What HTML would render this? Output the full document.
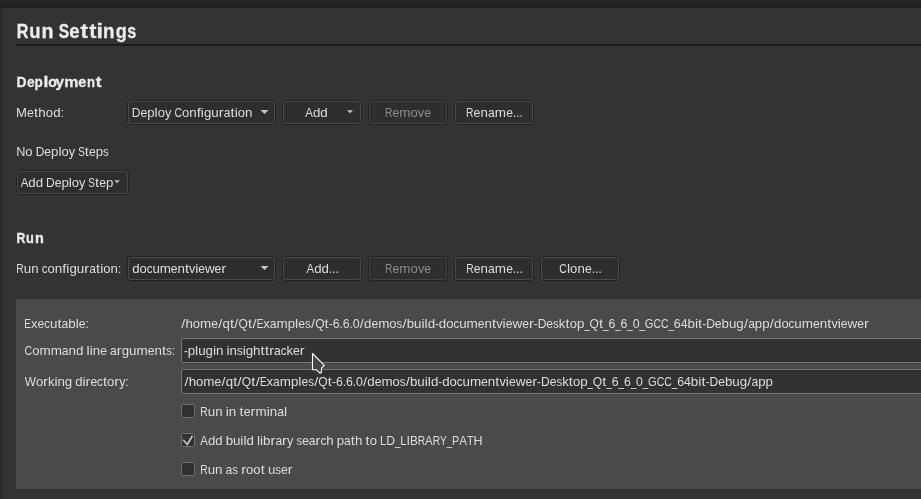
<!DOCTYPE html>
<html><head><meta charset="utf-8">
<style>
html,body{margin:0;padding:0;background:#333333;overflow:hidden;width:921px;height:499px}
svg{display:block;will-change:transform}
text{font-family:"Liberation Sans",sans-serif;font-size:13px;white-space:pre;fill:#dddddd}
.b,.b text{font-weight:bold;fill:#ececec;stroke:#ececec;stroke-width:0.3px}
.d text,text.d{fill:#8c8c8c}
</style></head><body>
<svg width="921" height="499" viewBox="0 0 921 499">
<rect x="0" y="0" width="921" height="499" fill="#333333"/>
<rect x="0" y="0" width="921" height="7" fill="#242424"/>
<rect x="0" y="7" width="921" height="1" fill="#1d1d1d"/>
<rect x="1" y="8" width="1" height="491" fill="#222222"/>
<rect x="0" y="8" width="1" height="491" fill="#2f2f2f"/>
<rect x="16" y="44" width="905" height="2" fill="#1c1c1c"/>
<rect x="127.5" y="100.5" width="148" height="24" rx="3.5" fill="none" stroke="#222222"/><rect x="128.5" y="101.5" width="146" height="22" rx="2" fill="#2e2e2e" stroke="#4a4a4a"/>
<path d="M260.5 110 h8 l-4.0 4 z" fill="#c4c4c4"/>
<rect x="282.5" y="100.5" width="79" height="24" rx="3.5" fill="none" stroke="#222222"/><rect x="283.5" y="101.5" width="77" height="22" rx="2" fill="#2e2e2e" stroke="#4a4a4a"/>
<path d="M347.0 110.2 h6 l-3.0 3 z" fill="#c4c4c4"/>
<rect x="368.5" y="100.5" width="79" height="24" rx="3.5" fill="none" stroke="#222222"/><rect x="369.5" y="101.5" width="77" height="22" rx="2" fill="#2e2e2e" stroke="#434343"/>
<rect x="454.5" y="100.5" width="79" height="24" rx="3.5" fill="none" stroke="#222222"/><rect x="455.5" y="101.5" width="77" height="22" rx="2" fill="#2e2e2e" stroke="#4a4a4a"/>
<rect x="16.5" y="170.5" width="112" height="24" rx="3.5" fill="none" stroke="#222222"/><rect x="17.5" y="171.5" width="110" height="22" rx="2" fill="#2e2e2e" stroke="#4a4a4a"/>
<path d="M114.0 180.3 h6 l-3.0 3 z" fill="#b4b4b4"/>
<rect x="127.5" y="256.5" width="148" height="24" rx="3.5" fill="none" stroke="#222222"/><rect x="128.5" y="257.5" width="146" height="22" rx="2" fill="#2e2e2e" stroke="#4a4a4a"/>
<path d="M260.5 266 h8 l-4.0 4 z" fill="#c4c4c4"/>
<rect x="282.5" y="256.5" width="79" height="24" rx="3.5" fill="none" stroke="#222222"/><rect x="283.5" y="257.5" width="77" height="22" rx="2" fill="#2e2e2e" stroke="#4a4a4a"/>
<rect x="368.5" y="256.5" width="79" height="24" rx="3.5" fill="none" stroke="#222222"/><rect x="369.5" y="257.5" width="77" height="22" rx="2" fill="#2e2e2e" stroke="#434343"/>
<rect x="454.5" y="256.5" width="79" height="24" rx="3.5" fill="none" stroke="#222222"/><rect x="455.5" y="257.5" width="77" height="22" rx="2" fill="#2e2e2e" stroke="#4a4a4a"/>
<rect x="540.5" y="256.5" width="79" height="24" rx="3.5" fill="none" stroke="#222222"/><rect x="541.5" y="257.5" width="77" height="22" rx="2" fill="#2e2e2e" stroke="#4a4a4a"/>
<rect x="16" y="299" width="905" height="190" fill="#4a4a4a"/>
<rect x="181.5" y="338.5" width="745" height="24" rx="1.5" fill="#323232" stroke="#747474"/>
<rect x="181.5" y="369.5" width="745" height="24" rx="1.5" fill="#323232" stroke="#747474"/>
<rect x="181.5" y="404.5" width="13" height="13" rx="1" fill="#313131" stroke="#707070"/>
<rect x="181.5" y="433.5" width="13" height="13" rx="1" fill="#313131" stroke="#707070"/>
<rect x="181.5" y="462.5" width="13" height="13" rx="1" fill="#313131" stroke="#707070"/>
<path d="M183.6 440.3 L187.3 444.5 L192.1 436.2" fill="none" stroke="#c4c4c4" stroke-width="1.7" stroke-linecap="round" stroke-linejoin="round"/>
<g class="b"><text transform="matrix(0.832 0 0 1 16.71 37.5)" style="font-size:19.5px">R</text><text transform="matrix(0.945 0 0 1 29.36 37.5)" style="font-size:19.5px">u</text><text transform="matrix(1.009 0 0 1 41.50 37.5)" style="font-size:19.5px">n</text><text transform="matrix(0.800 0 0 1 58.85 37.5)" style="font-size:19.5px">S</text><text transform="matrix(0.956 0 0 1 69.37 37.5)" style="font-size:19.5px">e</text><text transform="matrix(1.147 0 0 1 80.53 37.5)" style="font-size:19.5px">t</text><text transform="matrix(1.097 0 0 1 89.34 37.5)" style="font-size:19.5px">t</text><text transform="matrix(1.196 0 0 1 96.47 37.5)" style="font-size:19.5px">i</text><text transform="matrix(0.966 0 0 1 102.96 37.5)" style="font-size:19.5px">n</text><text transform="matrix(0.928 0 0 1 115.66 37.5)" style="font-size:19.5px">g</text><text transform="matrix(0.833 0 0 1 127.33 37.5)" style="font-size:19.5px">s</text></g>
<g class="b"><text transform="matrix(0.943 0 0 1 16.47 87.0)" style="font-size:14.7px">D</text><text transform="matrix(0.930 0 0 1 27.07 87.0)" style="font-size:14.7px">e</text><text transform="matrix(0.918 0 0 1 34.51 87.0)" style="font-size:14.7px">p</text><text transform="matrix(1.190 0 0 1 43.38 87.0)" style="font-size:14.7px">l</text><text transform="matrix(0.958 0 0 1 48.15 87.0)" style="font-size:14.7px">o</text><text transform="matrix(1.052 0 0 1 55.48 87.0)" style="font-size:14.7px">y</text><text transform="matrix(1.081 0 0 1 64.35 87.0)" style="font-size:14.7px">m</text><text transform="matrix(0.986 0 0 1 78.33 87.0)" style="font-size:14.7px">e</text><text transform="matrix(0.887 0 0 1 87.04 87.0)" style="font-size:14.7px">n</text><text transform="matrix(1.168 0 0 1 95.69 87.0)" style="font-size:14.7px">t</text></g>
<g class="b"><text transform="matrix(0.836 0 0 1 16.38 242.6)" style="font-size:14.7px">R</text><text transform="matrix(0.873 0 0 1 26.00 242.6)" style="font-size:14.7px">u</text><text transform="matrix(0.986 0 0 1 34.94 242.6)" style="font-size:14.7px">n</text></g>
<g><text transform="matrix(1.005 0 0 1 15.93 116.8)">M</text><text transform="matrix(0.936 0 0 1 26.98 116.8)">e</text><text transform="matrix(1.120 0 0 1 33.99 116.8)">t</text><text transform="matrix(1.026 0 0 1.05 38.24 116.8)">h</text><text transform="matrix(1.004 0 0 1 45.77 116.8)">o</text><text transform="matrix(1.021 0 0 1.05 53.14 116.8)">d</text><text transform="matrix(0.890 0 0 1 60.63 116.8)">:</text></g>
<g><text transform="matrix(0.929 0 0 1 131.71 116.8)">D</text><text transform="matrix(0.936 0 0 1 140.43 116.8)">e</text><text transform="matrix(1.021 0 0 1 147.20 116.8)">p</text><text transform="matrix(1.072 0 0 1.05 154.58 116.8)">l</text><text transform="matrix(1.004 0 0 1 157.67 116.8)">o</text><text transform="matrix(0.978 0 0 1 164.93 116.8)">y</text><text transform="matrix(0.808 0 0 1 174.41 116.8)">C</text><text transform="matrix(1.004 0 0 1 181.99 116.8)">o</text><text transform="matrix(1.026 0 0 1 189.25 116.8)">n</text><text transform="matrix(1.120 0 0 1.05 196.71 116.8)">f</text><text transform="matrix(1.072 0 0 1 200.79 116.8)">i</text><text transform="matrix(1.021 0 0 1 203.89 116.8)">g</text><text transform="matrix(1.026 0 0 1 211.26 116.8)">u</text><text transform="matrix(1.120 0 0 1 218.73 116.8)">r</text><text transform="matrix(0.931 0 0 1 223.63 116.8)">a</text><text transform="matrix(1.120 0 0 1 230.51 116.8)">t</text><text transform="matrix(1.072 0 0 1 234.70 116.8)">i</text><text transform="matrix(1.004 0 0 1 237.79 116.8)">o</text><text transform="matrix(1.026 0 0 1 245.05 116.8)">n</text></g>
<g><text transform="matrix(0.884 0 0 1 305.28 116.8)">A</text><text transform="matrix(1.021 0 0 1.05 312.92 116.8)">d</text><text transform="matrix(1.021 0 0 1.05 320.28 116.8)">d</text></g>
<g class="d"><text transform="matrix(0.790 0 0 1 384.96 116.8)">R</text><text transform="matrix(0.936 0 0 1 392.41 116.8)">e</text><text transform="matrix(1.036 0 0 1 399.22 116.8)">m</text><text transform="matrix(1.004 0 0 1 410.49 116.8)">o</text><text transform="matrix(0.977 0 0 1 417.79 116.8)">v</text><text transform="matrix(0.936 0 0 1 424.17 116.8)">e</text></g>
<g><text transform="matrix(0.790 0 0 1 466.06 116.8)">R</text><text transform="matrix(0.936 0 0 1 473.58 116.8)">e</text><text transform="matrix(1.026 0 0 1 480.45 116.8)">n</text><text transform="matrix(0.931 0 0 1 487.98 116.8)">a</text><text transform="matrix(1.036 0 0 1 494.81 116.8)">m</text><text transform="matrix(0.936 0 0 1 506.20 116.8)">e</text><text transform="matrix(0.890 0 0 1 513.07 116.8)">.</text><text transform="matrix(0.890 0 0 1 516.34 116.8)">.</text><text transform="matrix(0.890 0 0 1 519.60 116.8)">.</text></g>
<g><text transform="matrix(0.978 0 0 1 16.16 155.9)">N</text><text transform="matrix(1.004 0 0 1 25.29 155.9)">o</text><text transform="matrix(0.929 0 0 1 35.63 155.9)">D</text><text transform="matrix(0.936 0 0 1 44.31 155.9)">e</text><text transform="matrix(1.021 0 0 1 51.05 155.9)">p</text><text transform="matrix(1.072 0 0 1.05 58.39 155.9)">l</text><text transform="matrix(1.004 0 0 1 61.48 155.9)">o</text><text transform="matrix(0.978 0 0 1 68.70 155.9)">y</text><text transform="matrix(0.760 0 0 1 78.13 155.9)">S</text><text transform="matrix(1.120 0 0 1 84.82 155.9)">t</text><text transform="matrix(0.936 0 0 1 88.98 155.9)">e</text><text transform="matrix(1.021 0 0 1 95.72 155.9)">p</text><text transform="matrix(0.884 0 0 1 103.07 155.9)">s</text></g>
<g><text transform="matrix(0.884 0 0 1 20.78 186.7)">A</text><text transform="matrix(1.021 0 0 1.05 28.37 186.7)">d</text><text transform="matrix(1.021 0 0 1.05 35.68 186.7)">d</text><text transform="matrix(0.929 0 0 1 46.08 186.7)">D</text><text transform="matrix(0.936 0 0 1 54.72 186.7)">e</text><text transform="matrix(1.021 0 0 1 61.43 186.7)">p</text><text transform="matrix(1.072 0 0 1.05 68.74 186.7)">l</text><text transform="matrix(1.004 0 0 1 71.80 186.7)">o</text><text transform="matrix(0.978 0 0 1 78.99 186.7)">y</text><text transform="matrix(0.760 0 0 1 88.37 186.7)">S</text><text transform="matrix(1.120 0 0 1 95.03 186.7)">t</text><text transform="matrix(0.936 0 0 1 99.17 186.7)">e</text><text transform="matrix(1.021 0 0 1 105.88 186.7)">p</text></g>
<g><text transform="matrix(0.790 0 0 1 16.36 272.8)">R</text><text transform="matrix(1.026 0 0 1 23.78 272.8)">u</text><text transform="matrix(1.026 0 0 1 31.20 272.8)">n</text><text transform="matrix(0.886 0 0 1 41.74 272.8)">c</text><text transform="matrix(1.004 0 0 1 47.51 272.8)">o</text><text transform="matrix(1.026 0 0 1 54.77 272.8)">n</text><text transform="matrix(1.120 0 0 1.05 62.23 272.8)">f</text><text transform="matrix(1.072 0 0 1 66.32 272.8)">i</text><text transform="matrix(1.021 0 0 1 69.42 272.8)">g</text><text transform="matrix(1.026 0 0 1 76.81 272.8)">u</text><text transform="matrix(1.120 0 0 1 84.28 272.8)">r</text><text transform="matrix(0.931 0 0 1 89.19 272.8)">a</text><text transform="matrix(1.120 0 0 1 96.07 272.8)">t</text><text transform="matrix(1.072 0 0 1 100.26 272.8)">i</text><text transform="matrix(1.004 0 0 1 103.36 272.8)">o</text><text transform="matrix(1.026 0 0 1 110.62 272.8)">n</text><text transform="matrix(0.890 0 0 1 118.04 272.8)">:</text></g>
<g><text transform="matrix(1.021 0 0 1.05 132.34 272.8)">d</text><text transform="matrix(1.004 0 0 1 139.61 272.8)">o</text><text transform="matrix(0.886 0 0 1 146.76 272.8)">c</text><text transform="matrix(1.026 0 0 1 152.44 272.8)">u</text><text transform="matrix(1.036 0 0 1 159.74 272.8)">m</text><text transform="matrix(0.936 0 0 1 170.79 272.8)">e</text><text transform="matrix(1.026 0 0 1 177.46 272.8)">n</text><text transform="matrix(1.120 0 0 1 184.91 272.8)">t</text><text transform="matrix(0.977 0 0 1 189.03 272.8)">v</text><text transform="matrix(1.072 0 0 1 195.28 272.8)">i</text><text transform="matrix(0.936 0 0 1 198.33 272.8)">e</text><text transform="matrix(1.039 0 0 1 205.00 272.8)">w</text><text transform="matrix(0.936 0 0 1 214.61 272.8)">e</text><text transform="matrix(1.120 0 0 1 221.33 272.8)">r</text></g>
<g><text transform="matrix(0.884 0 0 1 306.38 272.8)">A</text><text transform="matrix(1.021 0 0 1.05 314.13 272.8)">d</text><text transform="matrix(1.021 0 0 1.05 321.58 272.8)">d</text><text transform="matrix(0.890 0 0 1 329.04 272.8)">.</text><text transform="matrix(0.890 0 0 1 332.29 272.8)">.</text><text transform="matrix(0.890 0 0 1 335.54 272.8)">.</text></g>
<g class="d"><text transform="matrix(0.790 0 0 1 385.06 272.8)">R</text><text transform="matrix(0.936 0 0 1 392.51 272.8)">e</text><text transform="matrix(1.036 0 0 1 399.32 272.8)">m</text><text transform="matrix(1.004 0 0 1 410.59 272.8)">o</text><text transform="matrix(0.977 0 0 1 417.89 272.8)">v</text><text transform="matrix(0.936 0 0 1 424.27 272.8)">e</text></g>
<g><text transform="matrix(0.790 0 0 1 466.16 272.8)">R</text><text transform="matrix(0.936 0 0 1 473.66 272.8)">e</text><text transform="matrix(1.026 0 0 1 480.51 272.8)">n</text><text transform="matrix(0.931 0 0 1 488.02 272.8)">a</text><text transform="matrix(1.036 0 0 1 494.83 272.8)">m</text><text transform="matrix(0.936 0 0 1 506.18 272.8)">e</text><text transform="matrix(0.890 0 0 1 513.03 272.8)">.</text><text transform="matrix(0.890 0 0 1 516.29 272.8)">.</text><text transform="matrix(0.890 0 0 1 519.54 272.8)">.</text></g>
<g><text transform="matrix(0.808 0 0 1 559.27 272.8)">C</text><text transform="matrix(1.072 0 0 1.05 566.96 272.8)">l</text><text transform="matrix(1.004 0 0 1 570.11 272.8)">o</text><text transform="matrix(1.026 0 0 1 577.48 272.8)">n</text><text transform="matrix(0.936 0 0 1 585.00 272.8)">e</text><text transform="matrix(0.890 0 0 1 591.87 272.8)">.</text><text transform="matrix(0.890 0 0 1 595.14 272.8)">.</text><text transform="matrix(0.890 0 0 1 598.40 272.8)">.</text></g>
<g><text transform="matrix(0.769 0 0 1 24.28 328.0)">E</text><text transform="matrix(1.008 0 0 1 30.92 328.0)">x</text><text transform="matrix(0.936 0 0 1 37.44 328.0)">e</text><text transform="matrix(0.886 0 0 1 44.17 328.0)">c</text><text transform="matrix(1.026 0 0 1 49.90 328.0)">u</text><text transform="matrix(1.120 0 0 1 57.42 328.0)">t</text><text transform="matrix(0.931 0 0 1 61.59 328.0)">a</text><text transform="matrix(1.021 0 0 1.05 68.29 328.0)">b</text><text transform="matrix(1.072 0 0 1.05 75.63 328.0)">l</text><text transform="matrix(0.936 0 0 1 78.71 328.0)">e</text><text transform="matrix(0.890 0 0 1 85.44 328.0)">:</text></g>
<g><text transform="matrix(0.808 0 0 1 24.57 354.8)">C</text><text transform="matrix(1.004 0 0 1 32.15 354.8)">o</text><text transform="matrix(1.036 0 0 1 39.42 354.8)">m</text><text transform="matrix(1.036 0 0 1 50.64 354.8)">m</text><text transform="matrix(0.931 0 0 1 61.87 354.8)">a</text><text transform="matrix(1.026 0 0 1 68.61 354.8)">n</text><text transform="matrix(1.021 0 0 1.05 76.03 354.8)">d</text><text transform="matrix(1.072 0 0 1.05 86.53 354.8)">l</text><text transform="matrix(1.072 0 0 1 89.63 354.8)">i</text><text transform="matrix(1.026 0 0 1 92.73 354.8)">n</text><text transform="matrix(0.936 0 0 1 100.15 354.8)">e</text><text transform="matrix(0.931 0 0 1 110.04 354.8)">a</text><text transform="matrix(1.120 0 0 1 116.83 354.8)">r</text><text transform="matrix(1.021 0 0 1 121.73 354.8)">g</text><text transform="matrix(1.026 0 0 1 129.12 354.8)">u</text><text transform="matrix(1.036 0 0 1 136.54 354.8)">m</text><text transform="matrix(0.936 0 0 1 147.76 354.8)">e</text><text transform="matrix(1.026 0 0 1 154.54 354.8)">n</text><text transform="matrix(1.120 0 0 1 162.10 354.8)">t</text><text transform="matrix(0.884 0 0 1 166.29 354.8)">s</text><text transform="matrix(0.890 0 0 1 172.04 354.8)">:</text></g>
<g><text transform="matrix(0.911 0 0 1 24.85 385.8)">W</text><text transform="matrix(1.004 0 0 1 35.89 385.8)">o</text><text transform="matrix(1.120 0 0 1 43.11 385.8)">r</text><text transform="matrix(1.008 0 0 1.05 47.95 385.8)">k</text><text transform="matrix(1.072 0 0 1 54.43 385.8)">i</text><text transform="matrix(1.026 0 0 1 57.49 385.8)">n</text><text transform="matrix(1.021 0 0 1 64.81 385.8)">g</text><text transform="matrix(1.021 0 0 1.05 75.19 385.8)">d</text><text transform="matrix(1.072 0 0 1 82.48 385.8)">i</text><text transform="matrix(1.120 0 0 1 85.59 385.8)">r</text><text transform="matrix(0.936 0 0 1 90.43 385.8)">e</text><text transform="matrix(0.886 0 0 1 97.12 385.8)">c</text><text transform="matrix(1.120 0 0 1 102.95 385.8)">t</text><text transform="matrix(1.004 0 0 1 107.09 385.8)">o</text><text transform="matrix(1.120 0 0 1 114.32 385.8)">r</text><text transform="matrix(0.978 0 0 1 119.16 385.8)">y</text><text transform="matrix(0.890 0 0 1 125.44 385.8)">:</text></g>
<g><text transform="matrix(0.893 0 0 1 183.88 354.8)">-</text><text transform="matrix(1.021 0 0 1 187.73 354.8)">p</text><text transform="matrix(1.072 0 0 1.05 195.08 354.8)">l</text><text transform="matrix(1.026 0 0 1 198.16 354.8)">u</text><text transform="matrix(1.021 0 0 1 205.55 354.8)">g</text><text transform="matrix(1.072 0 0 1 212.90 354.8)">i</text><text transform="matrix(1.026 0 0 1 215.98 354.8)">n</text><text transform="matrix(1.072 0 0 1 226.47 354.8)">i</text><text transform="matrix(1.026 0 0 1 229.55 354.8)">n</text><text transform="matrix(0.884 0 0 1 236.94 354.8)">s</text><text transform="matrix(1.072 0 0 1 242.66 354.8)">i</text><text transform="matrix(1.021 0 0 1 245.74 354.8)">g</text><text transform="matrix(1.026 0 0 1.05 253.09 354.8)">h</text><text transform="matrix(1.120 0 0 1 260.62 354.8)">t</text><text transform="matrix(1.120 0 0 1 264.93 354.8)">t</text><text transform="matrix(1.120 0 0 1 269.16 354.8)">r</text><text transform="matrix(0.931 0 0 1 274.04 354.8)">a</text><text transform="matrix(0.886 0 0 1 280.74 354.8)">c</text><text transform="matrix(1.008 0 0 1.05 286.48 354.8)">k</text><text transform="matrix(0.936 0 0 1 293.00 354.8)">e</text><text transform="matrix(1.120 0 0 1 299.79 354.8)">r</text></g>
<g><text transform="matrix(0.790 0 0 1 200.36 416.0)">R</text><text transform="matrix(1.026 0 0 1 207.78 416.0)">u</text><text transform="matrix(1.026 0 0 1 215.20 416.0)">n</text><text transform="matrix(1.072 0 0 1 225.74 416.0)">i</text><text transform="matrix(1.026 0 0 1 228.84 416.0)">n</text><text transform="matrix(1.120 0 0 1 239.53 416.0)">t</text><text transform="matrix(0.936 0 0 1 243.72 416.0)">e</text><text transform="matrix(1.120 0 0 1 250.55 416.0)">r</text><text transform="matrix(1.036 0 0 1 255.45 416.0)">m</text><text transform="matrix(1.072 0 0 1 266.68 416.0)">i</text><text transform="matrix(1.026 0 0 1 269.78 416.0)">n</text><text transform="matrix(0.931 0 0 1 277.20 416.0)">a</text><text transform="matrix(1.072 0 0 1.05 283.94 416.0)">l</text></g>
<g><text transform="matrix(0.884 0 0 1 200.28 444.9)">A</text><text transform="matrix(1.021 0 0 1.05 207.90 444.9)">d</text><text transform="matrix(1.021 0 0 1.05 215.23 444.9)">d</text><text transform="matrix(1.021 0 0 1.05 225.67 444.9)">b</text><text transform="matrix(1.026 0 0 1 233.00 444.9)">u</text><text transform="matrix(1.072 0 0 1 240.37 444.9)">i</text><text transform="matrix(1.072 0 0 1.05 243.45 444.9)">l</text><text transform="matrix(1.021 0 0 1.05 246.53 444.9)">d</text><text transform="matrix(1.072 0 0 1.05 256.96 444.9)">l</text><text transform="matrix(1.072 0 0 1 260.04 444.9)">i</text><text transform="matrix(1.021 0 0 1.05 263.12 444.9)">b</text><text transform="matrix(1.120 0 0 1 270.51 444.9)">r</text><text transform="matrix(0.931 0 0 1 275.38 444.9)">a</text><text transform="matrix(1.120 0 0 1 282.12 444.9)">r</text><text transform="matrix(0.978 0 0 1 286.99 444.9)">y</text><text transform="matrix(0.884 0 0 1 296.42 444.9)">s</text><text transform="matrix(0.936 0 0 1 302.13 444.9)">e</text><text transform="matrix(0.931 0 0 1 308.85 444.9)">a</text><text transform="matrix(1.120 0 0 1 315.60 444.9)">r</text><text transform="matrix(0.886 0 0 1 320.47 444.9)">c</text><text transform="matrix(1.026 0 0 1.05 326.20 444.9)">h</text><text transform="matrix(1.021 0 0 1 336.67 444.9)">p</text><text transform="matrix(0.931 0 0 1 344.00 444.9)">a</text><text transform="matrix(1.120 0 0 1 350.84 444.9)">t</text><text transform="matrix(1.026 0 0 1.05 355.00 444.9)">h</text><text transform="matrix(1.120 0 0 1 365.61 444.9)">t</text><text transform="matrix(1.004 0 0 1 369.77 444.9)">o</text><text transform="matrix(0.866 0 0 1 380.09 444.9)">L</text><text transform="matrix(0.929 0 0 1 386.32 444.9)">D</text><text transform="matrix(0.760 0 0 1 394.88 444.9)">_</text><text transform="matrix(0.866 0 0 1 400.23 444.9)">L</text><text transform="matrix(0.973 0 0 1 406.46 444.9)">I</text><text transform="matrix(0.901 0 0 1 409.95 444.9)">B</text><text transform="matrix(0.790 0 0 1 417.72 444.9)">R</text><text transform="matrix(0.884 0 0 1 425.09 444.9)">A</text><text transform="matrix(0.790 0 0 1 432.71 444.9)">R</text><text transform="matrix(0.782 0 0 1 440.08 444.9)">Y</text><text transform="matrix(0.760 0 0 1 446.71 444.9)">_</text><text transform="matrix(0.835 0 0 1 452.07 444.9)">P</text><text transform="matrix(0.884 0 0 1 459.26 444.9)">A</text><text transform="matrix(0.836 0 0 1 466.88 444.9)">T</text><text transform="matrix(0.964 0 0 1 473.47 444.9)">H</text></g>
<g><text transform="matrix(0.790 0 0 1 200.36 473.9)">R</text><text transform="matrix(1.026 0 0 1 207.74 473.9)">u</text><text transform="matrix(1.026 0 0 1 215.11 473.9)">n</text><text transform="matrix(0.931 0 0 1 225.60 473.9)">a</text><text transform="matrix(0.884 0 0 1 232.29 473.9)">s</text><text transform="matrix(1.120 0 0 1 241.17 473.9)">r</text><text transform="matrix(1.004 0 0 1 246.05 473.9)">o</text><text transform="matrix(1.004 0 0 1 253.27 473.9)">o</text><text transform="matrix(1.120 0 0 1 260.64 473.9)">t</text><text transform="matrix(1.026 0 0 1 267.91 473.9)">u</text><text transform="matrix(0.884 0 0 1 275.29 473.9)">s</text><text transform="matrix(0.936 0 0 1 281.01 473.9)">e</text><text transform="matrix(1.120 0 0 1 287.79 473.9)">r</text></g>
<g><text transform="matrix(1.120 0 0 1 181.20 328.0)">/</text><text transform="matrix(1.026 0 0 1.05 185.44 328.0)">h</text><text transform="matrix(1.004 0 0 1 192.83 328.0)">o</text><text transform="matrix(1.036 0 0 1 200.07 328.0)">m</text><text transform="matrix(0.936 0 0 1 211.26 328.0)">e</text><text transform="matrix(1.120 0 0 1 218.21 328.0)">/</text><text transform="matrix(1.021 0 0 1 222.45 328.0)">q</text><text transform="matrix(1.120 0 0 1 229.96 328.0)">t</text><text transform="matrix(1.120 0 0 1 234.34 328.0)">/</text><text transform="matrix(0.926 0 0 1 238.58 328.0)">Q</text><text transform="matrix(1.120 0 0 1 248.06 328.0)">t</text><text transform="matrix(1.120 0 0 1 252.44 328.0)">/</text><text transform="matrix(0.769 0 0 1 256.68 328.0)">E</text><text transform="matrix(1.008 0 0 1 263.33 328.0)">x</text><text transform="matrix(0.931 0 0 1 269.86 328.0)">a</text><text transform="matrix(1.036 0 0 1 276.58 328.0)">m</text><text transform="matrix(1.021 0 0 1 287.76 328.0)">p</text><text transform="matrix(1.072 0 0 1.05 295.12 328.0)">l</text><text transform="matrix(0.936 0 0 1 298.21 328.0)">e</text><text transform="matrix(0.884 0 0 1 304.95 328.0)">s</text><text transform="matrix(1.120 0 0 1 310.89 328.0)">/</text><text transform="matrix(0.926 0 0 1 315.13 328.0)">Q</text><text transform="matrix(1.120 0 0 1 324.61 328.0)">t</text><text transform="matrix(0.893 0 0 1 328.78 328.0)">-</text><text transform="matrix(0.949 0 0 1 332.64 328.0)">6</text><text transform="matrix(0.890 0 0 1 339.48 328.0)">.</text><text transform="matrix(0.949 0 0 1 342.68 328.0)">6</text><text transform="matrix(0.890 0 0 1 349.53 328.0)">.</text><text transform="matrix(0.949 0 0 1 352.73 328.0)">0</text><text transform="matrix(1.120 0 0 1 359.79 328.0)">/</text><text transform="matrix(1.021 0 0 1.05 364.03 328.0)">d</text><text transform="matrix(0.936 0 0 1 371.38 328.0)">e</text><text transform="matrix(1.036 0 0 1 378.13 328.0)">m</text><text transform="matrix(1.004 0 0 1 389.32 328.0)">o</text><text transform="matrix(0.884 0 0 1 396.55 328.0)">s</text><text transform="matrix(1.120 0 0 1 402.49 328.0)">/</text><text transform="matrix(1.021 0 0 1.05 406.74 328.0)">b</text><text transform="matrix(1.026 0 0 1 414.09 328.0)">u</text><text transform="matrix(1.072 0 0 1 421.49 328.0)">i</text><text transform="matrix(1.072 0 0 1.05 424.57 328.0)">l</text><text transform="matrix(1.021 0 0 1.05 427.66 328.0)">d</text><text transform="matrix(0.893 0 0 1 435.02 328.0)">-</text><text transform="matrix(1.021 0 0 1.05 438.87 328.0)">d</text><text transform="matrix(1.004 0 0 1 446.23 328.0)">o</text><text transform="matrix(0.886 0 0 1 453.46 328.0)">c</text><text transform="matrix(1.026 0 0 1 459.21 328.0)">u</text><text transform="matrix(1.036 0 0 1 466.60 328.0)">m</text><text transform="matrix(0.936 0 0 1 477.78 328.0)">e</text><text transform="matrix(1.026 0 0 1 484.53 328.0)">n</text><text transform="matrix(1.120 0 0 1 492.07 328.0)">t</text><text transform="matrix(0.977 0 0 1 496.24 328.0)">v</text><text transform="matrix(1.072 0 0 1 502.57 328.0)">i</text><text transform="matrix(0.936 0 0 1 505.66 328.0)">e</text><text transform="matrix(1.039 0 0 1 512.41 328.0)">w</text><text transform="matrix(0.936 0 0 1 522.13 328.0)">e</text><text transform="matrix(1.120 0 0 1 528.93 328.0)">r</text><text transform="matrix(0.893 0 0 1 533.82 328.0)">-</text><text transform="matrix(0.929 0 0 1 537.67 328.0)">D</text><text transform="matrix(0.936 0 0 1 546.37 328.0)">e</text><text transform="matrix(0.884 0 0 1 553.12 328.0)">s</text><text transform="matrix(1.008 0 0 1.05 558.85 328.0)">k</text><text transform="matrix(1.120 0 0 1 565.52 328.0)">t</text><text transform="matrix(1.004 0 0 1 569.70 328.0)">o</text><text transform="matrix(1.021 0 0 1 576.94 328.0)">p</text><text transform="matrix(0.760 0 0 1 584.19 328.0)">_</text><text transform="matrix(0.926 0 0 1 589.56 328.0)">Q</text><text transform="matrix(1.120 0 0 1 599.03 328.0)">t</text><text transform="matrix(0.760 0 0 1 603.10 328.0)">_</text><text transform="matrix(0.949 0 0 1 608.47 328.0)">6</text><text transform="matrix(0.760 0 0 1 615.21 328.0)">_</text><text transform="matrix(0.949 0 0 1 620.58 328.0)">6</text><text transform="matrix(0.760 0 0 1 627.31 328.0)">_</text><text transform="matrix(0.949 0 0 1 632.68 328.0)">0</text><text transform="matrix(0.760 0 0 1 639.42 328.0)">_</text><text transform="matrix(0.860 0 0 1 644.79 328.0)">G</text><text transform="matrix(0.808 0 0 1 653.46 328.0)">C</text><text transform="matrix(0.808 0 0 1 661.02 328.0)">C</text><text transform="matrix(0.760 0 0 1 668.48 328.0)">_</text><text transform="matrix(0.949 0 0 1 673.85 328.0)">6</text><text transform="matrix(0.949 0 0 1 680.69 328.0)">4</text><text transform="matrix(1.021 0 0 1.05 687.53 328.0)">b</text><text transform="matrix(1.072 0 0 1 694.89 328.0)">i</text><text transform="matrix(1.120 0 0 1 698.12 328.0)">t</text><text transform="matrix(0.893 0 0 1 702.30 328.0)">-</text><text transform="matrix(0.929 0 0 1 706.15 328.0)">D</text><text transform="matrix(0.936 0 0 1 714.85 328.0)">e</text><text transform="matrix(1.021 0 0 1.05 721.59 328.0)">b</text><text transform="matrix(1.026 0 0 1 728.95 328.0)">u</text><text transform="matrix(1.021 0 0 1 736.34 328.0)">g</text><text transform="matrix(1.120 0 0 1 743.91 328.0)">/</text><text transform="matrix(0.931 0 0 1 748.15 328.0)">a</text><text transform="matrix(1.021 0 0 1 754.86 328.0)">p</text><text transform="matrix(1.021 0 0 1 762.22 328.0)">p</text><text transform="matrix(1.120 0 0 1 769.79 328.0)">/</text><text transform="matrix(1.021 0 0 1.05 774.03 328.0)">d</text><text transform="matrix(1.004 0 0 1 781.39 328.0)">o</text><text transform="matrix(0.886 0 0 1 788.62 328.0)">c</text><text transform="matrix(1.026 0 0 1 794.37 328.0)">u</text><text transform="matrix(1.036 0 0 1 801.76 328.0)">m</text><text transform="matrix(0.936 0 0 1 812.94 328.0)">e</text><text transform="matrix(1.026 0 0 1 819.69 328.0)">n</text><text transform="matrix(1.120 0 0 1 827.23 328.0)">t</text><text transform="matrix(0.977 0 0 1 831.40 328.0)">v</text><text transform="matrix(1.072 0 0 1 837.73 328.0)">i</text><text transform="matrix(0.936 0 0 1 840.82 328.0)">e</text><text transform="matrix(1.039 0 0 1 847.57 328.0)">w</text><text transform="matrix(0.936 0 0 1 857.29 328.0)">e</text><text transform="matrix(1.120 0 0 1 864.09 328.0)">r</text></g>
<g><text transform="matrix(1.120 0 0 1 184.40 385.8)">/</text><text transform="matrix(1.026 0 0 1.05 188.64 385.8)">h</text><text transform="matrix(1.004 0 0 1 196.04 385.8)">o</text><text transform="matrix(1.036 0 0 1 203.28 385.8)">m</text><text transform="matrix(0.936 0 0 1 214.47 385.8)">e</text><text transform="matrix(1.120 0 0 1 221.42 385.8)">/</text><text transform="matrix(1.021 0 0 1 225.67 385.8)">q</text><text transform="matrix(1.120 0 0 1 233.17 385.8)">t</text><text transform="matrix(1.120 0 0 1 237.55 385.8)">/</text><text transform="matrix(0.926 0 0 1 241.80 385.8)">Q</text><text transform="matrix(1.120 0 0 1 251.27 385.8)">t</text><text transform="matrix(1.120 0 0 1 255.66 385.8)">/</text><text transform="matrix(0.769 0 0 1 259.90 385.8)">E</text><text transform="matrix(1.008 0 0 1 266.56 385.8)">x</text><text transform="matrix(0.931 0 0 1 273.09 385.8)">a</text><text transform="matrix(1.036 0 0 1 279.80 385.8)">m</text><text transform="matrix(1.021 0 0 1 290.99 385.8)">p</text><text transform="matrix(1.072 0 0 1.05 298.35 385.8)">l</text><text transform="matrix(0.936 0 0 1 301.44 385.8)">e</text><text transform="matrix(0.884 0 0 1 308.19 385.8)">s</text><text transform="matrix(1.120 0 0 1 314.13 385.8)">/</text><text transform="matrix(0.926 0 0 1 318.37 385.8)">Q</text><text transform="matrix(1.120 0 0 1 327.85 385.8)">t</text><text transform="matrix(0.893 0 0 1 332.02 385.8)">-</text><text transform="matrix(0.949 0 0 1 335.88 385.8)">6</text><text transform="matrix(0.890 0 0 1 342.72 385.8)">.</text><text transform="matrix(0.949 0 0 1 345.93 385.8)">6</text><text transform="matrix(0.890 0 0 1 352.77 385.8)">.</text><text transform="matrix(0.949 0 0 1 355.98 385.8)">0</text><text transform="matrix(1.120 0 0 1 363.03 385.8)">/</text><text transform="matrix(1.021 0 0 1.05 367.28 385.8)">d</text><text transform="matrix(0.936 0 0 1 374.64 385.8)">e</text><text transform="matrix(1.036 0 0 1 381.38 385.8)">m</text><text transform="matrix(1.004 0 0 1 392.57 385.8)">o</text><text transform="matrix(0.884 0 0 1 399.81 385.8)">s</text><text transform="matrix(1.120 0 0 1 405.75 385.8)">/</text><text transform="matrix(1.021 0 0 1.05 410.00 385.8)">b</text><text transform="matrix(1.026 0 0 1 417.36 385.8)">u</text><text transform="matrix(1.072 0 0 1 424.75 385.8)">i</text><text transform="matrix(1.072 0 0 1.05 427.84 385.8)">l</text><text transform="matrix(1.021 0 0 1.05 430.93 385.8)">d</text><text transform="matrix(0.893 0 0 1 438.28 385.8)">-</text><text transform="matrix(1.021 0 0 1.05 442.14 385.8)">d</text><text transform="matrix(1.004 0 0 1 449.50 385.8)">o</text><text transform="matrix(0.886 0 0 1 456.74 385.8)">c</text><text transform="matrix(1.026 0 0 1 462.48 385.8)">u</text><text transform="matrix(1.036 0 0 1 469.88 385.8)">m</text><text transform="matrix(0.936 0 0 1 481.06 385.8)">e</text><text transform="matrix(1.026 0 0 1 487.81 385.8)">n</text><text transform="matrix(1.120 0 0 1 495.35 385.8)">t</text><text transform="matrix(0.977 0 0 1 499.53 385.8)">v</text><text transform="matrix(1.072 0 0 1 505.86 385.8)">i</text><text transform="matrix(0.936 0 0 1 508.95 385.8)">e</text><text transform="matrix(1.039 0 0 1 515.70 385.8)">w</text><text transform="matrix(0.936 0 0 1 525.42 385.8)">e</text><text transform="matrix(1.120 0 0 1 532.23 385.8)">r</text><text transform="matrix(0.893 0 0 1 537.12 385.8)">-</text><text transform="matrix(0.929 0 0 1 540.97 385.8)">D</text><text transform="matrix(0.936 0 0 1 549.67 385.8)">e</text><text transform="matrix(0.884 0 0 1 556.42 385.8)">s</text><text transform="matrix(1.008 0 0 1.05 562.15 385.8)">k</text><text transform="matrix(1.120 0 0 1 568.83 385.8)">t</text><text transform="matrix(1.004 0 0 1 573.00 385.8)">o</text><text transform="matrix(1.021 0 0 1 580.24 385.8)">p</text><text transform="matrix(0.760 0 0 1 587.49 385.8)">_</text><text transform="matrix(0.926 0 0 1 592.87 385.8)">Q</text><text transform="matrix(1.120 0 0 1 602.34 385.8)">t</text><text transform="matrix(0.760 0 0 1 606.41 385.8)">_</text><text transform="matrix(0.949 0 0 1 611.79 385.8)">6</text><text transform="matrix(0.760 0 0 1 618.52 385.8)">_</text><text transform="matrix(0.949 0 0 1 623.90 385.8)">6</text><text transform="matrix(0.760 0 0 1 630.63 385.8)">_</text><text transform="matrix(0.949 0 0 1 636.01 385.8)">0</text><text transform="matrix(0.760 0 0 1 642.74 385.8)">_</text><text transform="matrix(0.860 0 0 1 648.12 385.8)">G</text><text transform="matrix(0.808 0 0 1 656.79 385.8)">C</text><text transform="matrix(0.808 0 0 1 664.35 385.8)">C</text><text transform="matrix(0.760 0 0 1 671.81 385.8)">_</text><text transform="matrix(0.949 0 0 1 677.18 385.8)">6</text><text transform="matrix(0.949 0 0 1 684.03 385.8)">4</text><text transform="matrix(1.021 0 0 1.05 690.87 385.8)">b</text><text transform="matrix(1.072 0 0 1 698.23 385.8)">i</text><text transform="matrix(1.120 0 0 1 701.46 385.8)">t</text><text transform="matrix(0.893 0 0 1 705.64 385.8)">-</text><text transform="matrix(0.929 0 0 1 709.49 385.8)">D</text><text transform="matrix(0.936 0 0 1 718.19 385.8)">e</text><text transform="matrix(1.021 0 0 1.05 724.94 385.8)">b</text><text transform="matrix(1.026 0 0 1 732.30 385.8)">u</text><text transform="matrix(1.021 0 0 1 739.69 385.8)">g</text><text transform="matrix(1.120 0 0 1 747.26 385.8)">/</text><text transform="matrix(0.931 0 0 1 751.50 385.8)">a</text><text transform="matrix(1.021 0 0 1 758.22 385.8)">p</text><text transform="matrix(1.021 0 0 1 765.58 385.8)">p</text></g>
<path d="M312.5 353.5 L324.3 365.4 L321.6 367.9 L321.3 372.4 L320.2 373.3 L316.3 369.7 L312.5 369.6 Z" fill="#454545" stroke="#ffffff" stroke-width="1.1" stroke-linejoin="round"/>
</svg>
</body></html>
